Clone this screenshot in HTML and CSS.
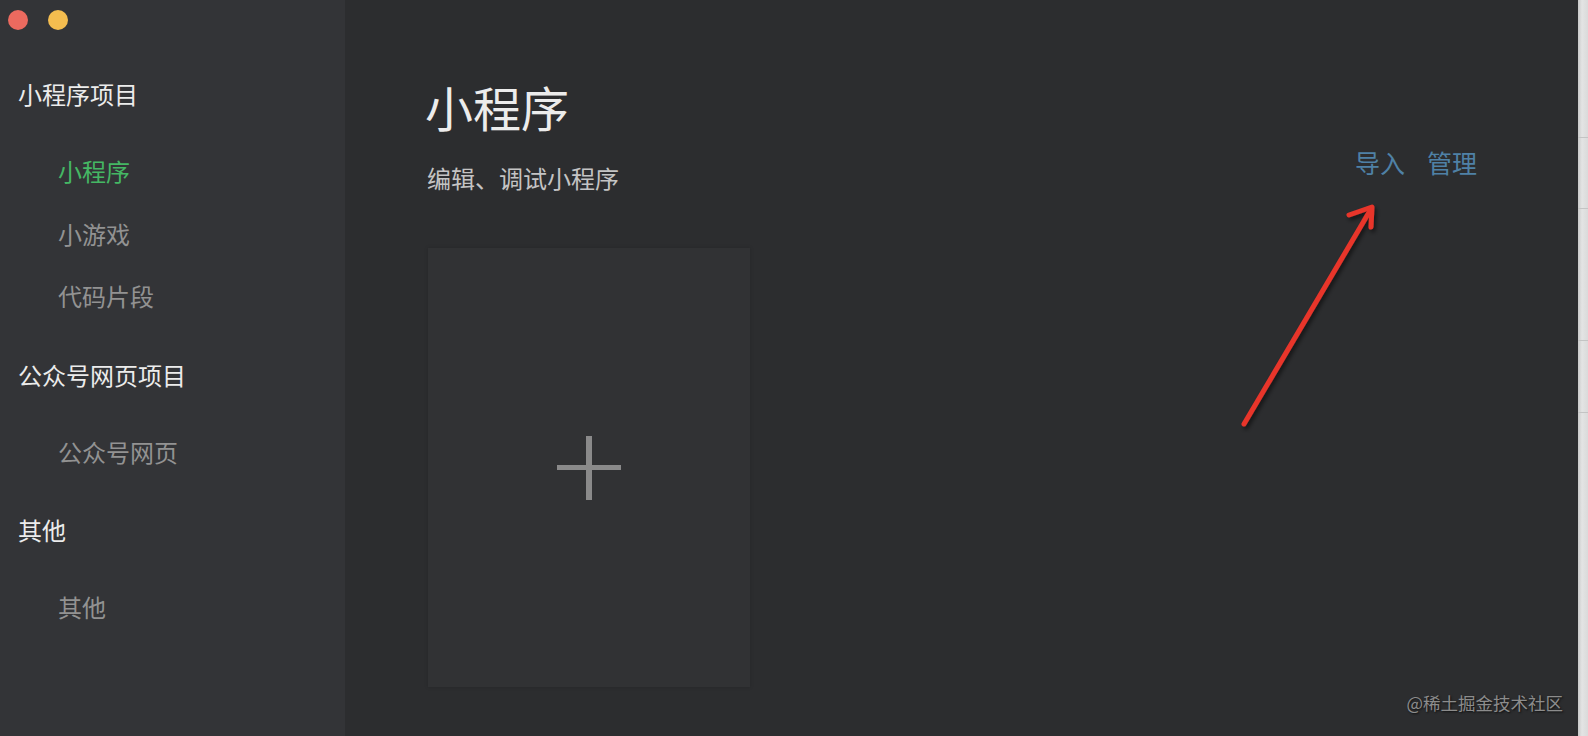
FILE: index.html
```html
<!DOCTYPE html>
<html lang="zh-CN">
<head>
  <meta charset="UTF-8" />
  <title>小程序项目</title>
  <link rel="stylesheet" href="styles.css">
</head>
<body>

  <div class="ventana">
    <!-- Barra lateral -->
    <aside class="lateral">
      <div class="barra-titulo">
        <span class="punto rojo"></span>
        <span class="punto amarillo"></span>
      </div>

      <nav class="menu">
        <section class="grupo">
          <h3 class="grupo-titulo">小程序项目</h3>
          <a class="item activo">小程序</a>
          <a class="item">小游戏</a>
          <a class="item">代码片段</a>
        </section>
        <section class="grupo">
          <h3 class="grupo-titulo">公众号网页项目</h3>
          <a class="item">公众号网页</a>
        </section>
        <section class="grupo">
          <h3 class="grupo-titulo">其他</h3>
          <a class="item">其他</a>
        </section>
      </nav>
    </aside>

    <!-- Contenido -->
    <main class="principal">
      <header class="cabecera">
        <div>
          <h1 class="titulo">小程序</h1>
          <p class="subtitulo">编辑、调试小程序</p>
        </div>
        <div class="acciones">
          <a>导入</a>
          <a>管理</a>
        </div>
      </header>

      <div class="tarjeta-nueva">
        <span class="mas"></span>
      </div>
    </main>

    <!-- Franja derecha -->
    <div class="franja">
      <i></i><i></i><i></i><i></i>
    </div>
  </div>

  <!-- Flecha de anotación -->
  <svg class="flecha" width="1588" height="736" viewBox="0 0 1588 736">
    <g stroke="#e8352b" stroke-width="5" stroke-linecap="round" stroke-linejoin="round" fill="none" filter="url(#sombra)">
      <path d="M1244 424 L1371 209"/>
      <path d="M1349 215 L1372 207 L1371 227"/>
    </g>
    <defs>
      <filter id="sombra" x="-20%" y="-20%" width="140%" height="140%">
        <feDropShadow dx="2" dy="3" stdDeviation="2" flood-color="#000" flood-opacity=".55"/>
      </filter>
    </defs>
  </svg>

  <div class="marca">@稀土掘金技术社区</div>

</body>
</html>
```

FILE: styles.css
```css
/* ---------- Variables ---------- */
:root{
  --lateral:#333437;
  --fondo:#2c2d2f;
  --tarjeta:#313234;
  --blanco:#ececec;
  --gris:#929292;
  --verde:#45b764;
  --azul:#4f81a6;
}
/* ---------- Base ---------- */
*{box-sizing:border-box}
html,body{height:100%}
body{
  margin:0;
  font-family:"Noto Sans CJK SC","Noto Sans",sans-serif;
  background:var(--fondo);
  color:var(--blanco);
  overflow:hidden;
}
h1,h3,p{margin:0;font-weight:400}
a{cursor:pointer}

.ventana{
  display:flex;
  height:736px;
}

/* ---------- Barra lateral ---------- */
.lateral{
  width:345px;
  flex:none;
  background:var(--lateral);
}
.barra-titulo{
  height:40px;
  display:flex;
  align-items:center;
  gap:20px;
  padding-left:8px;
}
.punto{width:20px;height:20px;border-radius:50%}
.rojo{background:#ec6a5f}
.amarillo{background:#f4bd4f}

.menu{padding-top:23px}
.grupo{
  display:flex;
  flex-direction:column;
  margin-bottom:16px;
}
.grupo-titulo{
  font-size:24px;
  line-height:62px;
  padding-left:18px;
  margin-bottom:15px;
  color:var(--blanco);
}
.item{
  font-size:24px;
  line-height:62.5px;
  padding-left:58px;
  color:var(--gris);
}
.item.activo{color:var(--verde)}

/* ---------- Contenido ---------- */
.principal{
  flex:1;
  padding:77px 101px 0 82px;
}
.cabecera{
  display:flex;
  justify-content:space-between;
  align-items:flex-start;
}
.titulo{
  font-size:48px;
  line-height:58px;
  margin-left:-2px;
}
.subtitulo{
  margin-top:28px;
  font-size:24px;
  line-height:30px;
  color:#c4c4c4;
}
.acciones{
  display:flex;
  gap:22px;
  margin-top:70px;
  font-size:25px;
  line-height:30px;
  color:var(--azul);
}

.tarjeta-nueva{
  width:322px;
  height:439px;
  margin-top:55px;
  margin-left:1px;
  background:var(--tarjeta);
  box-shadow:0 0 4px rgba(0,0,0,.15);
  display:flex;
  align-items:center;
  justify-content:center;
}
.mas{
  position:relative;
  width:64px;
  height:64px;
}
.mas::before,.mas::after{
  content:"";
  position:absolute;
  background:#8a8a8a;
}
.mas::before{left:0;right:0;top:29px;height:5px}
.mas::after{top:0;bottom:0;left:29px;width:6px}

/* ---------- Franja derecha ---------- */
.franja{
  width:10px;
  flex:none;
  background:linear-gradient(90deg,#c9c9c9,#e4e4e4 40%,#dadada);
  display:flex;
  flex-direction:column;
}
.franja i{
  display:block;
  height:1px;
  background:#c4c4c4;
}
.franja i:nth-child(1){margin-top:137px}
.franja i:nth-child(2){margin-top:70px}
.franja i:nth-child(3){margin-top:131px}
.franja i:nth-child(4){margin-top:71px}

/* ---------- Superposiciones ---------- */
.flecha{
  position:absolute;
  left:0;top:0;
  pointer-events:none;
}
.marca{
  position:absolute;
  right:25px;
  bottom:22px;
  font-size:17.5px;
  line-height:22px;
  color:#8c8c8c;
  text-shadow:1px 1px 2px rgba(0,0,0,.7);
}
```
